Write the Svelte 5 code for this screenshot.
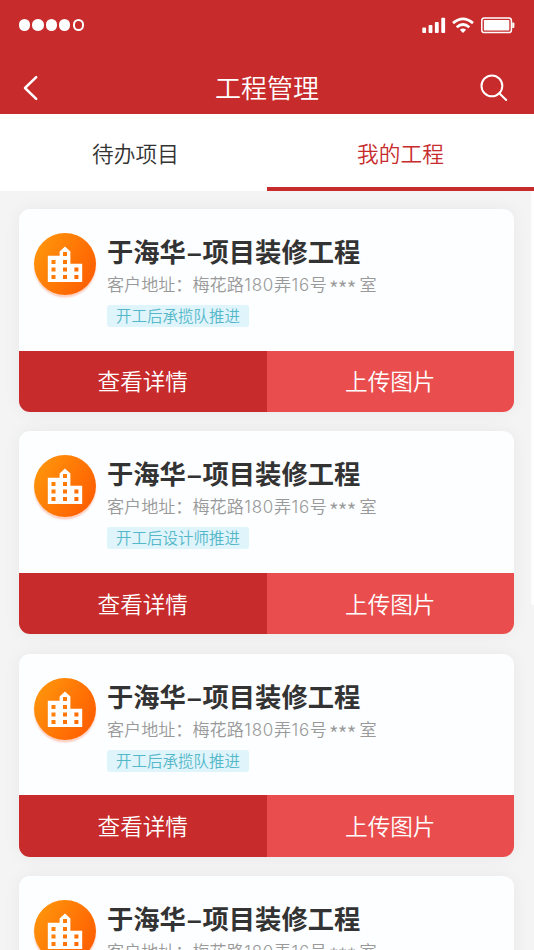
<script>
    const tabs = ["待办项目", "我的工程"];
    let activeTab = $state(1);

    const projects = [
        { client: "于海华", work: "项目装修工程", status: "开工后承揽队推进" },
        { client: "于海华", work: "项目装修工程", status: "开工后设计师推进" },
        { client: "于海华", work: "项目装修工程", status: "开工后承揽队推进" },
        { client: "于海华", work: "项目装修工程", status: "开工后承揽队推进" },
    ];
</script>

<div class="screen">
    <header class="header">
        <div class="status-bar">
            <div class="dots">
                <i></i><i></i><i></i><i></i><i class="empty"></i>
            </div>
            <div class="status-icons">
                <svg class="signal" width="24" height="17" viewBox="0 0 24 17" fill="#fff">
                    <rect x="0.3" y="10.6" width="3.8" height="5.4" rx="0.8" />
                    <rect x="6.6" y="8" width="3.8" height="8" rx="0.8" />
                    <rect x="12.9" y="5" width="3.8" height="11" rx="0.8" />
                    <rect x="19.3" y="0.8" width="3.8" height="15.2" rx="0.8" />
                </svg>
                <svg class="wifi" width="22" height="17" viewBox="0 0 22 17" fill="none" stroke="#fff" stroke-width="2.7">
                    <path d="M1 6.1 Q11 -2.3 21 6.1" />
                    <path d="M4.7 10.2 Q11 4.8 17.3 10.2" />
                    <path d="M7.9 12.8 Q11 10.2 14.1 12.8 L11 16 Z" fill="#fff" stroke="none" />
                </svg>
                <svg class="battery" width="34" height="17" viewBox="0 0 34 17">
                    <rect x="0.8" y="0.9" width="29.6" height="14.7" rx="2.6" fill="none" stroke="#fff" stroke-width="1.5" />
                    <rect x="2.9" y="3" width="25.4" height="10.4" rx="0.6" fill="#fff" />
                    <path d="M31.2 5.5 h1.2 q1 0 1 1 v3.4 q0 1 -1 1 h-1.2 z" fill="#fff" />
                </svg>
            </div>
        </div>
        <div class="nav-bar">
            <svg class="back" width="18" height="26" viewBox="0 0 18 26" fill="none" stroke="#fff" stroke-width="2.5" stroke-linecap="round" stroke-linejoin="round">
                <path d="M14.2 2.1 L3 13 L14.2 23.8" />
            </svg>
            <h1>工程管理</h1>
            <svg class="search" width="28" height="28" viewBox="0 0 28 28" fill="none" stroke="#fff" stroke-width="2" stroke-linecap="round">
                <circle cx="11.9" cy="11.9" r="10.4" />
                <path d="M19.3 19.3 L26.2 26" />
            </svg>
        </div>
    </header>

    <nav class="tabs">
        {#each tabs as tab, i}
            <button class="tab" class:active={activeTab === i} onclick={() => (activeTab = i)}>{tab}</button>
        {/each}
    </nav>

    <main class="list">
        {#each projects as project}
            <section class="card">
                <div class="info">
                    <div class="avatar">
                        <svg width="62" height="62" viewBox="0 0 62 62">
                            <path fill="#fff" fill-rule="evenodd" d="M13.8 22.8 H25.6 V18.6 L31 13.4 L36.4 18.6 V30.7 H48.2 V49 H13.8 Z
                                M29 19 v4 h4 v-4 z
                                M17.5 26.9 v4 h4 v-4 z M29 26.9 v4 h4 v-4 z
                                M17.5 34.5 v4 h4 v-4 z M29 34.5 v4 h4 v-4 z M40.4 34.5 v4 h4 v-4 z
                                M17.5 42.1 v4 h4 v-4 z M29 42.1 v4 h4 v-4 z M40.4 42.1 v4 h4 v-4 z" />
                        </svg>
                    </div>
                    <div class="text">
                        <h2>{project.client}<span class="dash">–</span>{project.work}</h2>
                        <p>客户地址：梅花路<span class="num">180</span>弄<span class="num">16</span>号<span class="mask">***</span>室</p>
                        <span class="tag">{project.status}</span>
                    </div>
                </div>
                <div class="actions">
                    <button class="detail">查看详情</button>
                    <button class="upload">上传图片</button>
                </div>
            </section>
        {/each}
        <div class="scrollbar"></div>
    </main>
</div>

<style>
    :global(body) {
        overflow: hidden;
    }

    .screen {
        display: flex;
        flex-direction: column;
        width: 534px;
        height: 950px;
        overflow: hidden;
        background: #f4f4f4;
        font-family: "Noto Sans CJK SC", sans-serif;
    }

    h1, h2, p {
        margin: 0;
    }

    button {
        border: 0;
        padding: 0;
        font-family: inherit;
        cursor: pointer;
    }

    svg {
        display: block;
    }

    /* Шапка */
    .header {
        flex: none;
        height: 114px;
        background: #c72b2c;
        color: #fff;
    }

    .status-bar {
        display: flex;
        justify-content: space-between;
        align-items: center;
        height: 50px;
        padding: 0 19px;
    }

    .dots {
        display: flex;
        gap: 2.2px;
    }

    .dots i {
        box-sizing: border-box;
        width: 11.2px;
        height: 11.2px;
        border-radius: 50%;
        background: #fff;
    }

    .dots .empty {
        border: 2px solid #fff;
        background: none;
    }

    .status-icons {
        display: flex;
    }

    .wifi {
        margin-left: 6px;
    }

    .battery {
        margin-left: 7px;
    }

    .nav-bar {
        display: flex;
        justify-content: space-between;
        align-items: center;
        box-sizing: border-box;
        height: 64px;
        padding: 11px 26px 0 22px;
    }

    h1 {
        padding: 0 0 2px 14px;
        font-size: 26px;
        font-weight: 350;
        line-height: 38px;
    }

    /* Вкладки */
    .tabs {
        flex: none;
        display: flex;
        height: 76.5px;
        background: #fff;
    }

    .tab {
        width: 50%;
        box-sizing: border-box;
        border-top: 4px solid transparent;
        border-bottom: 4px solid transparent;
        background: none;
        color: #333;
        font-size: 21.7px;
        font-weight: 350;
    }

    .tab:first-child {
        padding-left: 4px;
    }

    .tab.active {
        border-bottom-color: #c72b2c;
        color: #c72b2c;
    }

    /* Список карток */
    .list {
        position: relative;
        flex: 1;
        min-height: 0;
        display: flex;
        flex-direction: column;
        gap: 19.3px;
        padding: 18.5px 20px 0 19px;
        overflow: hidden;
    }

    .card {
        flex: none;
        height: 203px;
        display: flex;
        flex-direction: column;
        border-radius: 11px;
        background: #fcfeff;
        box-shadow: 0 0 18px rgba(0, 0, 0, 0.05);
        overflow: hidden;
    }

    .info {
        flex: 1;
        display: flex;
        gap: 11px;
        padding: 24px 0 0 15px;
    }

    .avatar {
        width: 62px;
        height: 62px;
        border-radius: 50%;
        background: linear-gradient(120deg, #ff970c 5%, #ff5a00 95%);
        box-shadow: 0 2.5px 1.5px rgba(255, 90, 40, 0.28);
    }

    .text {
        display: flex;
        flex-direction: column;
        align-items: flex-start;
        margin-top: -1px;
        white-space: nowrap;
    }

    h2 {
        color: #333;
        font-size: 26.3px;
        font-weight: 700;
        line-height: 38px;
    }

    .dash {
        margin: 0 1px;
        font-family: "Liberation Sans", sans-serif;
        line-height: 1;
    }

    p {
        margin-top: 1px;
        color: #999;
        font-size: 17.1px;
        font-weight: 350;
        line-height: 26px;
    }

    .num {
        margin-left: 0.5px;
        font-family: Inter, sans-serif;
        font-size: 17px;
        font-weight: 350;
        letter-spacing: 0.7px;
        line-height: 1;
    }

    .mask {
        position: relative;
        top: 6px;
        margin: 0 4px 0 2px;
        font-size: 21px;
        font-weight: 350;
        letter-spacing: -0.8px;
        line-height: 1;
    }

    .tag {
        height: 22px;
        margin-top: 8px;
        padding: 0 9px;
        border-radius: 3px;
        background: #e0f4fb;
        color: #54b8c9;
        font-size: 15.5px;
        font-weight: 350;
        line-height: 21px;
    }

    .actions {
        display: flex;
        height: 61.5px;
    }

    .actions button {
        width: 50%;
        padding-bottom: 1px;
        color: #fff;
        font-size: 22.6px;
        font-weight: 350;
    }

    .detail {
        background: #c72b2c;
    }

    .actions .upload {
        background: #e94d4d;
    }

    /* Смуга прокрутки */
    .scrollbar {
        position: absolute;
        top: 0;
        right: 0;
        width: 3px;
        height: 414px;
        background: #fdfdfd;
    }
</style>
